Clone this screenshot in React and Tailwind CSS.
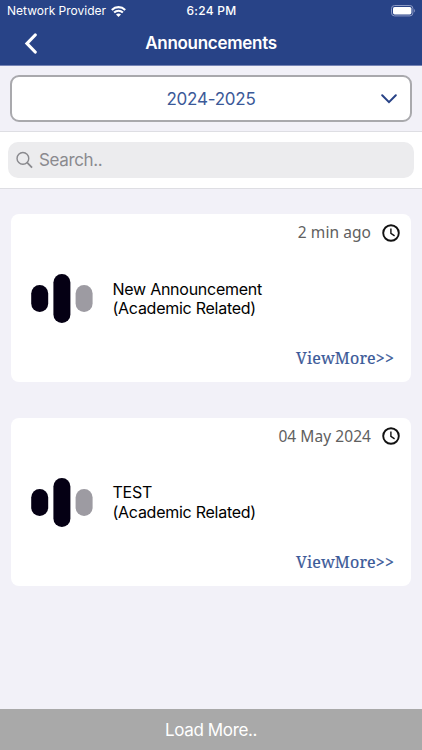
const announcements = [
  { time: "2 min ago", title: "New Announcement", category: "(Academic Related)" },
  { time: "04 May 2024", title: "TEST", category: "(Academic Related)" },
];

function StatusBar() {
  return (
    <div className="grid h-[22px] grid-cols-3 items-center pl-[7px] pr-[6px] text-white">
      <div className="flex items-center gap-[5px]">
        <span className="whitespace-nowrap text-[12px] leading-[22px]">Network Provider</span>
        <svg className="shrink-0" width="15" height="11" viewBox="0 0 15 11" fill="none" stroke="currentColor" strokeWidth="2.1">
          <path d="M0.8 3.9C4.6 0.2 10.4 0.2 14.2 3.9" />
          <path d="M3.1 6.6C5.6 4.2 9.4 4.2 11.9 6.6" />
          <path d="M7.5 10.9L5 8.5C6.4 7.2 8.6 7.2 10 8.5Z" fill="currentColor" stroke="none" />
        </svg>
      </div>
      <span className="text-center text-[12px] font-medium leading-[22px] tracking-[0.3px]">6:24 PM</span>
      <svg className="justify-self-end" width="25" height="12" viewBox="0 0 25 12" fill="none">
        <rect x="0.5" y="0.5" width="21.4" height="10.4" rx="3" stroke="#8c9ac5" />
        <rect x="2" y="2" width="18.4" height="7.4" rx="1.6" fill="white" />
        <path d="M23.2 4V7.5C24.4 6.8 24.4 4.7 23.2 4Z" fill="#8c9ac5" />
      </svg>
    </div>
  );
}

function Logo() {
  return (
    <svg className="shrink-0" width="62" height="49" viewBox="0 0 62 49">
      <rect x="0.2" y="11" width="17" height="27" rx="8.5" fill="#050014" />
      <rect x="22.4" y="0" width="17" height="49" rx="8.5" fill="#050014" />
      <rect x="44.6" y="11" width="17" height="27" rx="8.5" fill="#9d9ba2" />
    </svg>
  );
}

function Card({ time, title, category }) {
  return (
    <article className="flex h-[168px] flex-col rounded-[8px] bg-white">
      <div className="flex h-[37px] items-center justify-end gap-[11px] pr-[11px]">
        <span className="pt-px font-['Noto_Sans',sans-serif] text-[15.5px] tracking-[0.06px] text-[#606060]">{time}</span>
        <svg width="18" height="18" viewBox="0 0 18 18" fill="none" stroke="#111111">
          <circle cx="9" cy="9" r="7.8" strokeWidth="1.9" />
          <path d="M8.9 4.4V9.4L12.6 11.8" strokeWidth="1.4" />
        </svg>
      </div>
      <div className="flex h-[95px] items-center gap-5 pl-5">
        <Logo />
        <div className="pt-px text-[16px] leading-[19.5px] tracking-[-0.26px] text-black">
          <p>{title}</p>
          <p>{category}</p>
        </div>
      </div>
      <a className="mr-[17px] self-end font-['Noto_Serif','DejaVu_Serif',serif] text-[16px] leading-6 tracking-[0.15px] text-[#3b5998] [-webkit-text-stroke:0.2px_#3b5998]">
        ViewMore&gt;&gt;
      </a>
    </article>
  );
}

export default function App() {
  return (
    <div className="flex h-[750px] w-[422px] flex-col overflow-hidden bg-[#f2f1f8] font-['Inter',sans-serif]">
      <header className="h-[66px] shrink-0 border-b border-[#7684b5] bg-[#284387]">
        <StatusBar />
        <div className="grid h-[43px] grid-cols-[60px_1fr_60px] items-center text-white">
          <svg className="ml-6" width="14" height="22" viewBox="0 0 14 22" fill="none" stroke="currentColor" strokeWidth="3.2" strokeLinecap="round">
            <path d="M11.2 2L3 10.5L11.2 19" />
          </svg>
          <h1 className="text-center text-[17px] font-semibold tracking-[-0.28px]">Announcements</h1>
        </div>
      </header>
      <div className="px-[10px] pb-[9px] pt-[9px]">
        <div className="grid h-[47px] grid-cols-[1fr_auto_1fr] items-center rounded-[9px] border-2 border-[#a9a9ad] bg-white text-[#3b5998]">
          <span className="col-start-2 pt-[2px] text-[17px] tracking-[-0.24px]">2024-2025</span>
          <svg className="mr-[13px] justify-self-end" width="16" height="10" viewBox="0 0 16 10" fill="none" stroke="#284387" strokeWidth="2" strokeLinecap="round">
            <path d="M1.2 1.3L8 8.2L14.8 1.3" />
          </svg>
        </div>
      </div>
      <div className="h-[58px] shrink-0 border-y border-[#dedee3] bg-white px-[8px] pt-[10px]">
        <div className="flex h-[36px] items-center gap-[6px] rounded-[10px] bg-[#ececee] pl-[8px] text-[#8a8a8e]">
          <svg width="17" height="18" viewBox="0 0 18 18" fill="none" stroke="currentColor" strokeWidth="1.5">
            <circle cx="7.3" cy="7.3" r="6.2" />
            <path d="M11.6 11.6L17 17" strokeWidth="1.9" />
          </svg>
          <span className="pt-[2px] text-[17px] tracking-[-0.36px]">Search..</span>
        </div>
      </div>
      <main className="flex flex-1 flex-col gap-[35.5px] pl-[10.5px] pr-[11px] pt-[25px]">
        {announcements.map((item) => (
          <Card key={item.time} {...item} />
        ))}
      </main>
      <footer className="flex h-[41px] shrink-0 items-center justify-center bg-[#a9a9a9] pt-[2px] text-[17px] tracking-[-0.36px] text-white">
        Load More..
      </footer>
    </div>
  );
}
